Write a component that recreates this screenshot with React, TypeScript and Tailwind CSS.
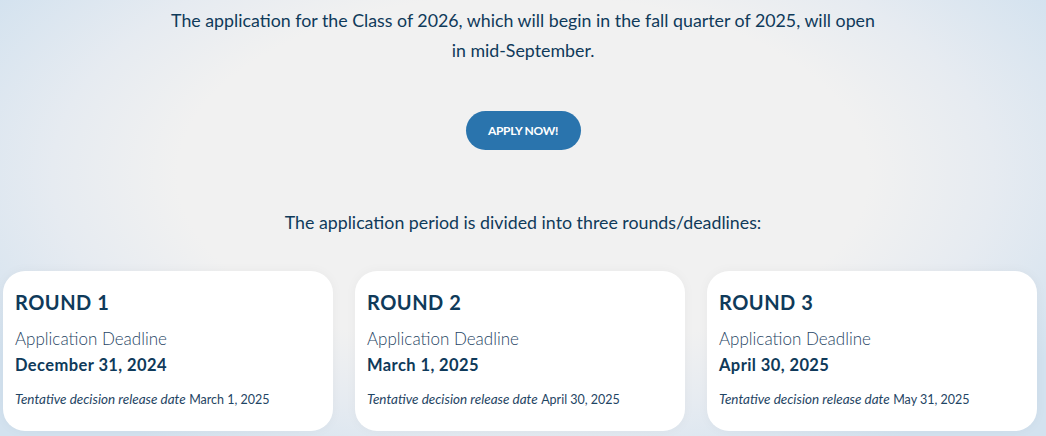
import React from "react";

const rounds = [
  { n: 1, date: "December 31, 2024", release: "March 1, 2025" },
  { n: 2, date: "March 1, 2025", release: "April 30, 2025" },
  { n: 3, date: "April 30, 2025", release: "May 31, 2025" },
];

export default function App() {
  return (
    <div
      className="w-[1046px] h-[436px] overflow-hidden text-[#0f3a5a]"
      style={{
        fontFamily: "Lato, 'Open Sans', sans-serif",
        background:
          "radial-gradient(ellipse 60% 75% at 50% 40%, #f1f1f1 0%, #f1f1f1 55%, #e6ebf1 75%, #d3e2ef 100%)",
      }}
    >
      <div className="flex flex-col items-center pt-[5px]">
        <p className="text-[17.8px] leading-[30px] text-center w-[712px]">
          The application for the Class of 2026, which will begin in the fall quarter of 2025, will open in mid-September.
        </p>
        <button className="mt-[46px] w-[115px] h-[39px] rounded-full bg-[#2a74ad] text-white text-[12px] font-bold tracking-tight">
          APPLY NOW!
        </button>
        <p className="mt-[60px] text-[17.8px] leading-[24px] text-center">
          The application period is divided into three rounds/deadlines:
        </p>
      </div>
      <div className="flex gap-[22px] pl-[3px] pr-[9px] mt-[37px]">
        {rounds.map((r) => (
          <div
            key={r.n}
            className="flex-1 h-[160px] bg-white rounded-[22px] px-[12px] pt-[19px] shadow-[0_0_12px_rgba(0,0,0,0.04)]"
          >
            <div className="text-[20px] font-bold tracking-wide leading-[24px] text-[#0f3a5a]">ROUND {r.n}</div>
            <div className="mt-[15px] text-[17px] font-light leading-[20px] text-[#1f4564]">Application Deadline</div>
            <div className="mt-[6px] text-[16.5px] font-bold leading-[20px] tracking-wide">{r.date}</div>
            <div className="mt-[16px] text-[13.5px] leading-[16px] text-[#1f4564]">
              <span className="italic">Tentative decision release date</span> <span className="text-[12.5px]">{r.release}</span>
            </div>
          </div>
        ))}
      </div>
    </div>
  );
}
